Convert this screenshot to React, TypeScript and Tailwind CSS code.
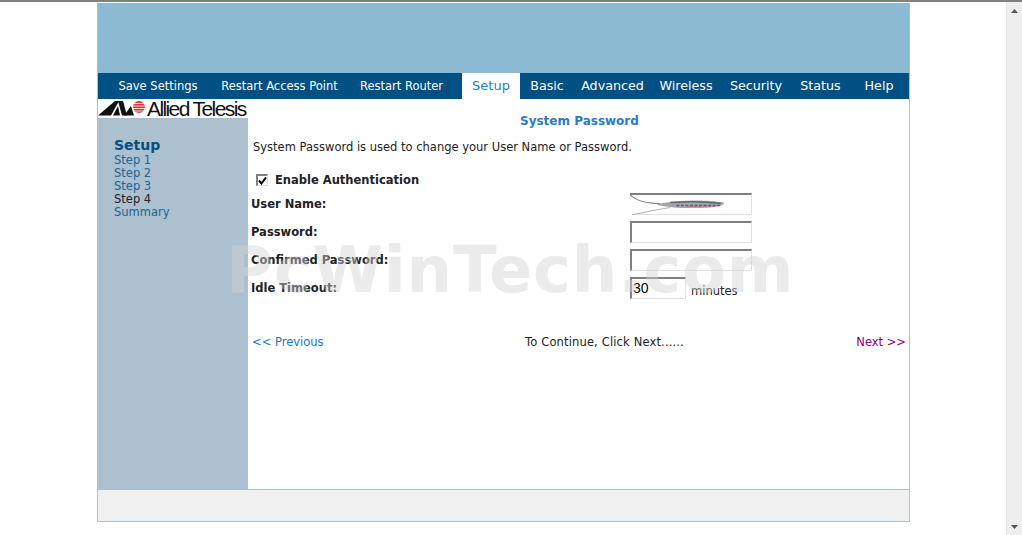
const NAV_LEFT = [
  { label: "Save Settings", width: "w-[120px]" },
  { label: "Restart Access Point", width: "w-[123px]" },
  { label: "Restart Router", width: "w-[121px]" },
];

const NAV_RIGHT = [
  { label: "Basic", width: "w-[54px]" },
  { label: "Advanced", width: "w-[77px]" },
  { label: "Wireless", width: "w-[70px]" },
  { label: "Security", width: "w-[70px]" },
  { label: "Status", width: "w-[59px]" },
  { label: "Help", width: "w-[58px]" },
];

const STEPS = ["Step 1", "Step 2", "Step 3", "Step 4", "Summary"];

function LogoMark() {
  return (
    <svg width="48" height="18" viewBox="0 0 48 18" className="shrink-0">
      <polygon points="0,15.5 13,15.5 21,1 17,1" fill="#111" />
      <polygon points="15,15.5 20,6 22,15.5" fill="#111" />
      <polygon points="20,1 25,1 29,15.5 24,15.5" fill="#111" />
      <polygon points="26,15.5 36,15.5 33,6" fill="#111" />
      <circle cx="41" cy="7" r="6" fill="#e0353f" />
      <path d="M35 3.5h12M35 6h12M35 8.500h12M35 11h12" stroke="#fff" strokeWidth="0.8" />
    </svg>
  );
}

function Squiggle() {
  return (
    <svg viewBox="0 0 121 21" className="absolute left-[-2px] top-[-2px] h-[22px] w-[122px]">
      <rect x="0" y="2" width="2" height="20" fill="#fff" />
      <path d="M0 1C6 8 16 10 30 10" fill="none" stroke="#8a8a8a" strokeWidth="1" />
      <path d="M2 21C14 19 26 16 40 14" fill="none" stroke="#b5b5b5" strokeWidth="1" />
      <path d="M26 11C45 6 78 6 93 9C94 11 90 13 80 14C60 15 40 15 26 11Z" fill="#a5a5a5" />
      <path d="M40 9C55 8 75 8 90 10" fill="none" stroke="#666" strokeWidth="1.5" />
      <path d="M46 12H90" stroke="#5f5a86" strokeWidth="1.5" strokeDasharray="3 1.5" />
      <path d="M58 13H84" stroke="#d05a70" strokeWidth="0.9" strokeDasharray="2 3" />
    </svg>
  );
}

function FieldRow({ label, children }: { label: string; children: React.ReactNode }) {
  return (
    <div className="flex h-[28px] items-center">
      <div className="w-[379px] pt-[2px] font-bold text-[#222]">{label}</div>
      {children}
    </div>
  );
}

function TextBox({ className = "w-[122px]", children }: { className?: string; children?: React.ReactNode }) {
  return (
    <div className={`relative h-[22px] border-2 border-t-[#808080] border-l-[#808080] border-r-[#e0e0e0] border-b-[#e0e0e0] border-r border-b bg-white ${className}`}>
      {children}
    </div>
  );
}

export default function App() {
  return (
    <div className="relative flex h-[535px] w-[1022px] overflow-hidden bg-white font-['DejaVu_Sans',sans-serif] text-[11.5px] text-[#222]">
      <div className="absolute left-0 right-0 top-0 h-[2px] bg-[#808080]" />

      <div className="ml-[97px] mt-[3px] flex h-[519px] w-[813px] flex-col border-x border-b border-[#adc0cf]">
        <div className="h-[70px] shrink-0 bg-[#8bbad2]" />

        <div className="flex h-[26px] shrink-0 items-stretch bg-[#005084] text-[11.5px] text-white">
          {NAV_LEFT.map((item) => (
            <div key={item.label} className={`flex items-center justify-center whitespace-nowrap pt-[1px] ${item.width}`}>
              {item.label}
            </div>
          ))}
          <div className="flex w-[58px] items-center justify-center bg-white text-[13px] text-[#2a7bc8]">Setup</div>
          {NAV_RIGHT.map((item) => (
            <div key={item.label} className={`flex items-center justify-center whitespace-nowrap text-[12.700px] ${item.width}`}>
              {item.label}
            </div>
          ))}
        </div>

        <div className="flex min-h-0 flex-1">
          <div className="flex w-[150px] shrink-0 flex-col bg-[#adc0cf]">
            <div className="flex h-[19px] items-center overflow-hidden whitespace-nowrap bg-white">
              <LogoMark />
              <span className="ml-[1px] font-['Liberation_Sans',sans-serif] text-[21px] leading-none tracking-[-1.6px] text-[#111]">Allied Telesis</span>
            </div>
            <div className="pl-[16px] pt-[19px]">
              <div className="text-[14px] font-bold leading-[17px] text-[#005084]">Setup</div>
              {STEPS.map((step) => (
                <div key={step} className={`text-[11.5px] leading-[13px] ${step === "Step 4" ? "text-[#222]" : "text-[#1a6496]"}`}>
                  {step}
                </div>
              ))}
            </div>
          </div>

          <div className="relative flex-1">
            <div className="ml-[272px] pt-[15px] text-[12px] font-bold leading-[15px] text-[#2a7bc8]">System Password</div>
            <div className="ml-[5px] mt-[11px] leading-[14px]">System Password is used to change your User Name or Password.</div>

            <div className="ml-[8px] mt-[19px] flex h-[14px] items-center">
              <div className="flex h-[12px] w-[12px] items-center justify-center border-2 border-[#808080] border-r border-b border-r-[#ddd] border-b-[#ddd]">
                <svg width="9" height="8" viewBox="0 0 9 8">
                  <path d="M1 3.5 3.500 6.5 8 0.500" fill="none" stroke="#000" strokeWidth="2" />
                </svg>
              </div>
              <span className="ml-[7px] mt-[2px] font-bold">Enable Authentication</span>
            </div>

            <div className="ml-[3px] mt-[3px]">
              <FieldRow label="User Name:">
                <TextBox>
                  <Squiggle />
                </TextBox>
              </FieldRow>
              <FieldRow label="Password:">
                <TextBox />
              </FieldRow>
              <FieldRow label="Confirmed Password:">
                <TextBox />
              </FieldRow>
              <FieldRow label="Idle Timeout:">
                <TextBox className="w-[56px]">
                  <span className="pl-[1px] font-['Liberation_Sans',sans-serif] text-[14px] leading-[19px] text-black">30</span>
                </TextBox>
                <span className="ml-[5px] mt-[7px] text-[#222]">minutes</span>
              </FieldRow>
            </div>

            <div className="ml-[4px] mr-[3px] mt-[33px] flex items-center leading-[14px]">
              <span className="w-[273px] text-[#1a76c8]">&lt;&lt; Previous</span>
              <span className="tracking-[0.15px] text-[#222]">To Continue, Click Next......</span>
              <span className="ml-auto text-[#800080]">Next &gt;&gt;</span>
            </div>

            <div className="pointer-events-none absolute left-[-22px] top-[136px] whitespace-nowrap text-[64px] font-bold leading-[70px] tracking-[0.8px] text-[#d3d3d3]/45">
              PcWinTech.com
            </div>
          </div>
        </div>

        <div className="h-[32px] shrink-0 border-t border-[#adc0cf] bg-[#f0f0f0]" />
      </div>

      <div className="ml-auto mt-[2px] flex h-[533px] w-[16px] flex-col items-center justify-between border-l border-[#e4e4e4] bg-[#eeeeee] pb-[6px] pt-[7px]">
        <svg width="7" height="4" viewBox="0 0 7 4"><polygon points="3.5,0 7,4 0,4" fill="#555" /></svg>
        <svg width="7" height="4" viewBox="0 0 7 4"><polygon points="0,0 7,0 3.5,4" fill="#555" /></svg>
      </div>
    </div>
  );
}
